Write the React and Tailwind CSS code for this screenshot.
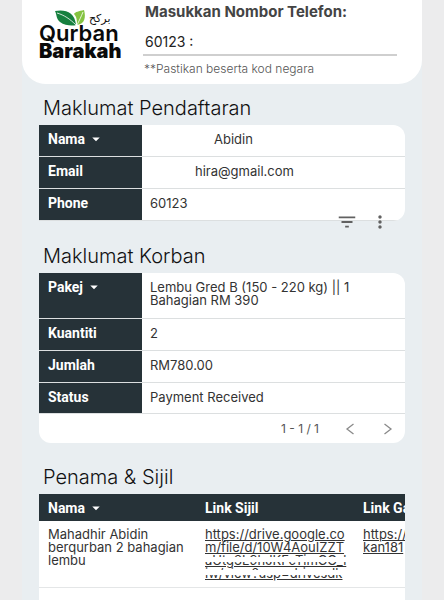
import React, { useState } from "react";
import { MdFilterList, MdMoreVert, MdArrowDropDown } from "react-icons/md";

const registration = [
  { label: "Nama", value: "Abidin", sortable: true, height: "h-[31px]", indent: "pl-[72px]" },
  { label: "Email", value: "hira@gmail.com", height: "h-8", indent: "pl-[53px]" },
  { label: "Phone", value: "60123", height: "h-8", indent: "pl-2" },
];

const korban = [
  { label: "Pakej", value: "Lembu Gred B (150 - 220 kg) || 1 Bahagian RM 390", sortable: true, height: "h-[46px]" },
  { label: "Kuantiti", value: "2", height: "h-8" },
  { label: "Jumlah", value: "RM780.00", height: "h-8" },
  { label: "Status", value: "Payment Received", height: "h-[31px]" },
];

const Logo = () => (
  <svg viewBox="0 0 84 60" className="w-[84px] h-[60px]" role="img" aria-label="Qurban Barakah">
    <path d="M16 3 C26 1 36 4 37 17 C34 18 26 18 21 14 C17 11 18 7 16 3 Z" fill="#16803f" />
    <path d="M18 5 C25 7 31 11 37 17" fill="none" stroke="#ffffff" strokeWidth="0.8" />
    <path d="M45 2 C40 3 36 4 35 6 C38 9 38 13 38 17 C46 16 47 9 45 2 Z" fill="#84c341" />
    <path d="M44 4 C42 9 40 13 38 17" fill="none" stroke="#ffffff" strokeWidth="0.8" />
    <text x="50" y="14" fontSize="11" fontFamily="'DejaVu Sans', sans-serif" fill="#111111">بركح</text>
    <text x="0" y="33" fontSize="22" fontWeight="600" fontFamily="Inter, sans-serif" fill="#0a0a0a">Qurban</text>
    <text x="0" y="50" fontSize="20" fontWeight="900" fontFamily="Inter, sans-serif" fill="#0a0a0a">Barakah</text>
  </svg>
);

const SortLabel = ({ children }) => (
  <button type="button" className="flex items-center gap-0.5 h-4 font-bold">
    {children}
    <MdArrowDropDown className="w-[18px] h-[18px]" />
  </button>
);

const SectionTitle = ({ children }) => (
  <h2 className="pl-1 text-xl leading-6 font-light text-[#111111]">{children}</h2>
);

const FieldTable = ({ rows }) => (
  <table className="w-full table-fixed border-collapse">
    <tbody>
      {rows.map((row) => (
        <tr key={row.label} className={`${row.height} border-b border-[#dcdfe0] align-top`}>
          <th scope="row" className="w-[103px] pl-[9px] pt-1.5 bg-[#263238] text-left font-[Roboto,sans-serif] text-sm leading-4 text-white">
            {row.sortable ? <SortLabel>{row.label}</SortLabel> : row.label}
          </th>
          <td className={`${row.indent || "pl-2"} pr-12 pt-2`}>{row.value}</td>
        </tr>
      ))}
    </tbody>
  </table>
);

const App = () => {
  const [phone, setPhone] = useState("60123 :");

  return (
    <div className="min-h-screen flex flex-col bg-[#ececed] px-[22px] font-[Inter,sans-serif] text-[#333333]">
      <div className="flex-1 flex flex-col bg-[#e9eef1]">
        <header className="flex h-[84px] gap-5 bg-white rounded-b-3xl pl-[17px] pr-[25px]">
          <div className="pt-2 shrink-0">
            <Logo />
          </div>
          <div className="flex-1 min-w-0 pt-1">
            <label htmlFor="phone" className="block pl-0.5 text-[15px] leading-4 font-bold text-[#444444] whitespace-nowrap">
              Masukkan Nombor Telefon:
            </label>
            <input
              id="phone"
              value={phone}
              onChange={(e) => setPhone(e.target.value)}
              className="mt-2 block w-full h-7 pl-0.5 text-sm text-[#222222] border-b-2 border-[#cfcfcf] bg-transparent outline-none"
            />
            <p className="pt-[5px] pl-px text-xs leading-4 font-light text-[#555555]">**Pastikan beserta kod negara</p>
          </div>
        </header>

        <main className="flex-1 flex flex-col px-[17px] text-[13px] leading-[13px]">
          {/* Registration details */}
          <section className="relative pt-3">
            <SectionTitle>Maklumat Pendaftaran</SectionTitle>
            <div className="mt-[5px] bg-white rounded-r-xl overflow-hidden">
              <FieldTable rows={registration} />
            </div>
            <div className="absolute right-[15px] -bottom-3 flex gap-3 text-[#616161]">
              <button type="button" aria-label="Filter">
                <MdFilterList className="w-[22px] h-[22px]" />
              </button>
              <button type="button" aria-label="More">
                <MdMoreVert className="w-5 h-5" />
              </button>
            </div>
          </section>

          {/* Package and payment */}
          <section className="pt-[23px]">
            <SectionTitle>Maklumat Korban</SectionTitle>
            <div className="mt-[5px] bg-white rounded-r-xl rounded-bl-xl overflow-hidden">
              <FieldTable rows={korban} />
              <div className="flex h-[29px] items-center justify-end pr-3 text-xs text-[#555555]">
                <span className="pr-[26px]">1 - 1 / 1</span>
                <button type="button" aria-label="Previous page" className="pr-7">
                  <svg viewBox="0 0 10 12" className="w-2.5 h-3" fill="none" stroke="#8a8a8a" strokeWidth="1.3">
                    <path d="M8.5 1 L2 6 L8.5 11" />
                  </svg>
                </button>
                <button type="button" aria-label="Next page">
                  <svg viewBox="0 0 10 12" className="w-2.5 h-3" fill="none" stroke="#8a8a8a" strokeWidth="1.3">
                    <path d="M1.5 1 L8 6 L1.5 11" />
                  </svg>
                </button>
              </div>
            </div>
          </section>

          {/* Names and certificates */}
          <section className="flex-1 flex flex-col pt-[22px]">
            <SectionTitle>Penama &amp; Sijil</SectionTitle>
            <div className="mt-[5px] flex-1 bg-white overflow-hidden">
              <table className="w-[474px] table-fixed border-collapse">
                <thead>
                  <tr className="h-[27px] bg-[#263238] text-left font-[Roboto,sans-serif] text-sm leading-4 text-white">
                    <th scope="col" className="pl-[9px]">
                      <SortLabel>Nama</SortLabel>
                    </th>
                    <th scope="col" className="pl-2">Link Sijil</th>
                    <th scope="col" className="pl-2">Link Gambar</th>
                  </tr>
                </thead>
                <tbody>
                  <tr className="h-[66px] border-b border-[#e4e6e7] align-top">
                    <td className="pl-[9px] pr-2 pt-[7px]">Mahadhir Abidin berqurban 2 bahagian lembu</td>
                    <td className="pl-2 pr-2 pt-[7px]">
                      <a href="#sijil" className="relative block underline whitespace-nowrap">
                        https://drive.google.co
                        <br />
                        m/file/d/10W4AouIZZT
                        <br />
                        aUtg3L9hJKFcTimCO_l
                        <br />
                        iw/view?usp=drivesdk
                        <span className="absolute inset-x-0 top-[29px] h-[5px] bg-white" />
                        <span className="absolute inset-x-0 top-[42px] h-[5px] bg-white" />
                      </a>
                    </td>
                    <td className="pl-2 pt-[7px]">
                      <a href="#gambar" className="block underline whitespace-nowrap">
                        https://drive
                        <br />
                        kan181
                      </a>
                    </td>
                  </tr>
                </tbody>
              </table>
            </div>
          </section>
        </main>
      </div>
    </div>
  );
};

export default App;
